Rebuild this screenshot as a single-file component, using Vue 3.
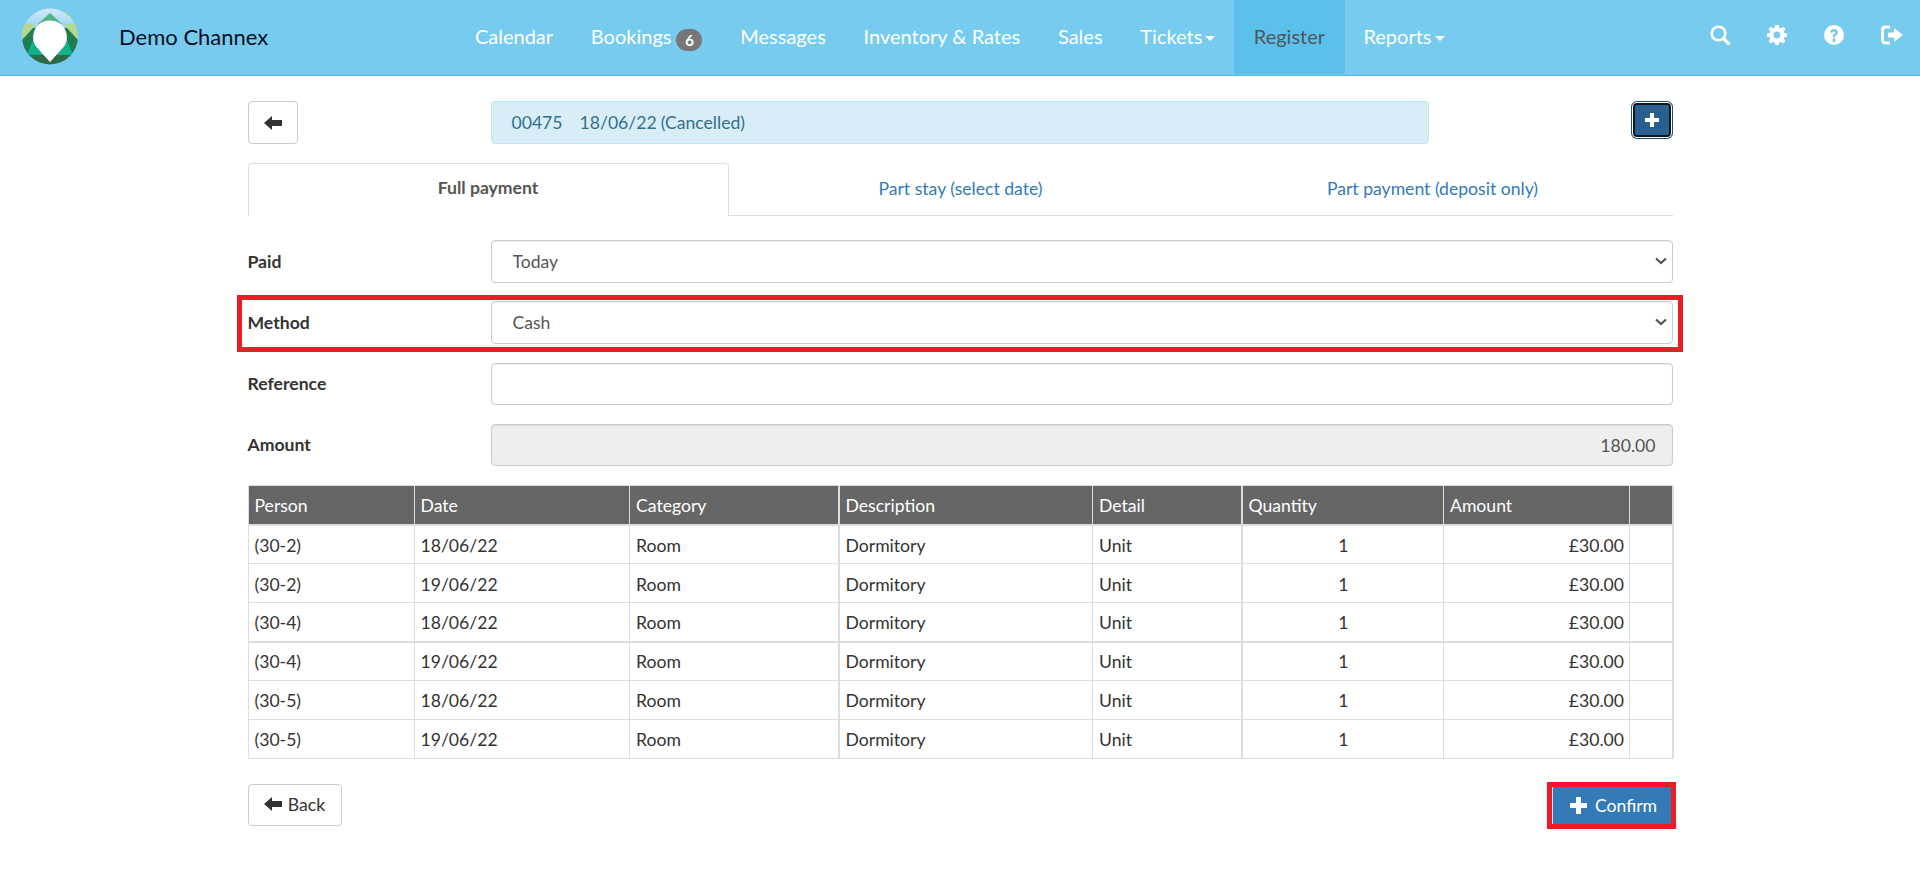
<script setup>
const navItems = [
  { label: 'Calendar' },
  { label: 'Bookings', badge: '6' },
  { label: 'Messages' },
  { label: 'Inventory & Rates' },
  { label: 'Sales' },
  { label: 'Tickets', caret: true },
  { label: 'Register', active: true },
  { label: 'Reports', caret: true }
]
const columns = ['Person', 'Date', 'Category', 'Description', 'Detail', 'Quantity', 'Amount', '']
const widths = [166, 215.5, 209, 254, 149, 202, 186, 43.5]
const rows = [
  ['(30-2)', '18/06/22'],
  ['(30-2)', '19/06/22'],
  ['(30-4)', '18/06/22'],
  ['(30-4)', '19/06/22'],
  ['(30-5)', '18/06/22'],
  ['(30-5)', '19/06/22']
]
</script>

<template>
  <div class="page">
    <header class="nav">
      <svg class="logo" viewBox="22 8 56 57" width="56" height="57" aria-hidden="true">
        <defs>
          <clipPath id="logoClip"><circle cx="50" cy="36.5" r="28" /></clipPath>
          <linearGradient id="sky" x1="0" y1="0" x2="0" y2="1">
            <stop offset="0" stop-color="#d4ecfb" />
            <stop offset="0.45" stop-color="#84cbec" />
          </linearGradient>
        </defs>
        <g clip-path="url(#logoClip)">
          <rect x="22" y="8" width="56" height="57" fill="url(#sky)" />
          <polygon points="22,24 34,24 34,38 22,38" fill="#b4d98c" />
          <polygon points="78,24 66,24 66,38 78,38" fill="#b4d98c" />
          <polygon points="50,13 38,24 62,24" fill="#4fb286" />
          <polygon points="63,12 73,12 73,20" fill="#f7e81e" />
          <polygon points="22,40 33,28 36,28 36,56 22,56" fill="#1f7d52" />
          <polygon points="78,40 67,28 64,28 64,56 78,56" fill="#1f7d52" />
          <polygon points="33,40 67,40 73,55 27,55" fill="#10b08c" />
          <rect x="22" y="55" width="56" height="10" fill="#2c6b45" />
        </g>
        <path d="M50 61.500 L36.500 46.500 C30.500 39 33.500 21 50 21 C66.500 21 69.500 39 63.500 46.500 Z" fill="#fff" stroke="#fff" stroke-linejoin="round" />
      </svg>
      <a class="brand">Demo Channex</a>
      <nav class="menu">
        <a v-for="item in navItems" :key="item.label" class="menu-item" :class="{ active: item.active }">
          {{ item.label }}<span v-if="item.badge" class="badge">{{ item.badge }}</span><span v-if="item.caret" class="caret"></span>
        </a>
      </nav>
      <div class="tools">
        <svg viewBox="0 0 20 20" width="20" height="20" aria-hidden="true">
          <circle cx="8.500" cy="8.500" r="6.800" fill="none" stroke="#fff" stroke-width="2.600" />
          <path d="M13.500 13.500 L19 19" stroke="#fff" stroke-width="3.200" stroke-linecap="round" />
        </svg>
        <svg viewBox="0 0 20 20" width="20" height="20" aria-hidden="true">
          <path fill="#fff" fill-rule="evenodd" d="M8.200 0h3.600l.5 2.800 1.500.6L16.200 1.800l2.200 2.200-1.600 2.400.6 1.500 2.600.5v3.400l-2.600.5-.6 1.500 1.600 2.400-2.200 2.200-2.400-1.600-1.500.6-.5 2.600H8.200l-.5-2.600-1.500-.6-2.400 1.600-2.200-2.200 1.600-2.400-.6-1.500L0 11.800V8.400l2.600-.5.6-1.500L1.600 4l2.200-2.200 2.400 1.600 1.500-.6zM10 6.600a3.400 3.400 0 1 0 0 6.800 3.400 3.400 0 0 0 0-6.800z" />
        </svg>
        <svg viewBox="0 0 20 20" width="20" height="20" aria-hidden="true">
          <path fill="#fff" fill-rule="evenodd" d="M10 0a10 10 0 1 1 0 20 10 10 0 0 1 0-20zM6.200 7.400l2.400.4c.2-.9.7-1.400 1.500-1.400.7 0 1.200.4 1.200 1 0 .5-.3.8-1 1.300-1.200.8-1.600 1.500-1.600 3v.5h2.500v-.3c0-.8.2-1.100 1-1.700 1.100-.8 1.700-1.500 1.700-2.900 0-2-1.700-3.300-3.900-3.300-2.200 0-3.800 1.200-3.800 3.400zM8.700 13.200V17h2.500v-3.800z" />
        </svg>
        <svg viewBox="0 0 22 20" width="22" height="20" aria-hidden="true">
          <path d="M9 2 H4.500 C2.800 2 1.500 3.300 1.500 5 V15 C1.500 16.700 2.800 18 4.500 18 H9" fill="none" stroke="#fff" stroke-width="2.800" />
          <polygon points="7,7.500 13,7.500 13,3 22,10 13,17 13,12.500 7,12.500" fill="#fff" />
        </svg>
      </div>
    </header>

    <main class="content">
      <div class="top-row">
        <button class="btn back-square" type="button">
          <svg class="arrow" viewBox="0 0 18 14" width="18" height="14" aria-hidden="true"><path d="M0 7 L8 0 V4 H18 V10 H8 V14 Z" fill="#333" /></svg>
        </button>
        <div class="booking"><span class="booking-id">00475</span><span>18/06/22</span><span>(Cancelled)</span></div>
        <button class="add" type="button">
          <svg viewBox="0 0 14 14" width="14" height="14" aria-hidden="true"><path d="M5 0 H9 V5 H14 V9 H9 V14 H5 V9 H0 V5 H5 Z" fill="#fff" /></svg>
        </button>
      </div>

      <div class="tabs">
        <a class="tab current">Full payment</a>
        <a class="tab">Part stay (select date)</a>
        <a class="tab">Part payment (deposit only)</a>
      </div>

      <form class="form" @submit.prevent>
        <div class="field select-field">
          <label>Paid</label>
          <div class="select-wrap">
            <select class="control"><option>Today</option></select>
            <svg class="chevron" viewBox="0 0 12 8" width="12" height="8" aria-hidden="true"><path d="M1 1.500 L6 6 L11 1.500" fill="none" stroke="#555" stroke-width="2.200" /></svg>
          </div>
        </div>
        <div class="field select-field marked">
          <label>Method</label>
          <div class="select-wrap">
            <select class="control"><option>Cash</option></select>
            <svg class="chevron" viewBox="0 0 12 8" width="12" height="8" aria-hidden="true"><path d="M1 1.500 L6 6 L11 1.500" fill="none" stroke="#555" stroke-width="2.200" /></svg>
          </div>
        </div>
        <div class="field">
          <label>Reference</label>
          <input class="control" type="text" />
        </div>
        <div class="field">
          <label>Amount</label>
          <input class="control amount" type="text" value="180.00" disabled />
        </div>
      </form>

      <table class="items">
        <colgroup>
          <col v-for="(w, i) in widths" :key="i" :style="{ width: w + 'px' }" />
        </colgroup>
        <thead>
          <tr><th v-for="(c, i) in columns" :key="i" :class="{ thick: i === 3 || i === 5 }">{{ c }}</th></tr>
        </thead>
        <tbody>
          <tr v-for="(r, i) in rows" :key="i" :class="{ split: i === 3 }">
            <td>{{ r[0] }}</td>
            <td>{{ r[1] }}</td>
            <td>Room</td>
            <td class="thick">Dormitory</td>
            <td>Unit</td>
            <td class="thick center">1</td>
            <td class="right">£30.00</td>
            <td></td>
          </tr>
        </tbody>
      </table>

      <div class="actions">
        <button class="btn back" type="button">
          <svg viewBox="0 0 18 14" width="18" height="14" aria-hidden="true"><path d="M0 7 L8 0 V4 H18 V10 H8 V14 Z" fill="#333" /></svg>
          Back
        </button>
        <div class="confirm-wrap">
          <button class="confirm" type="button">
            <svg viewBox="0 0 17 17" width="17" height="17" aria-hidden="true"><path d="M6 0 H11 V6 H17 V11 H11 V17 H6 V11 H0 V6 H6 Z" fill="#fff" /></svg>
            Confirm
          </button>
        </div>
      </div>
    </main>
  </div>
</template>

<style>
html, body { margin: 0; background: #fff; }
</style>

<style scoped>
.page {
  font-family: Lato, "Open Sans", sans-serif;
  font-size: 17.6px;
  color: #333;
  min-height: 896px;
}
.nav {
  height: 75px;
  background: #77cbee;
  border-bottom: 1px solid #5bb6dc;
  display: flex;
  align-items: flex-start;
  position: relative;
}
.logo { margin: 8px 0 0 22px; flex: none; }
.brand {
  margin: 22px 0 0 41px;
  width: 337px;
  flex: none;
  font-size: 22px;
  line-height: 30px;
  color: #0d0d22;
}
.menu { display: flex; height: 74px; }
.menu-item {
  padding: 0 18.900px;
  font-size: 20px;
  line-height: 73px;
  color: #fff;
  white-space: nowrap;
}
.menu-item.active { background: #5bc0ea; color: #555; padding: 0 19.500px; }
.badge {
  display: inline-block;
  margin-left: 5px;
  width: 26px;
  height: 22px;
  line-height: 22px;
  border-radius: 11px;
  background: #777;
  color: #fff;
  font-size: 15px;
  font-weight: 700;
  text-align: center;
  vertical-align: -2px;
}
.caret {
  display: inline-block;
  margin-left: 3px;
  width: 0;
  height: 0;
  border-top: 5px solid #fff;
  border-left: 5px solid transparent;
  border-right: 5px solid transparent;
  vertical-align: middle;
}
.tools {
  margin-left: auto;
  margin-right: 17px;
  margin-top: 25px;
  display: flex;
  gap: 37px;
}
.tools svg { display: block; }

.content {
  width: 1425px;
  margin: 0 auto;
  padding-top: 25px;
}
.top-row {
  display: grid;
  grid-template-columns: 243px 938px 1fr;
  align-items: start;
}
.btn {
  font: inherit;
  color: #333;
  background: #fff;
  border: 1px solid #ccc;
  border-radius: 4px;
  display: flex;
  align-items: center;
  justify-content: center;
}
.back-square { width: 50px; height: 43px; padding: 0; }
.booking {
  height: 43px;
  box-sizing: border-box;
  background: #d9edf7;
  border: 1px solid #bce8f1;
  border-radius: 4px;
  color: #31708f;
  display: flex;
  align-items: center;
  padding-left: 20px;
  gap: 4px;
}
.booking-id { margin-right: 13px; }
.add {
  justify-self: end;
  width: 38px;
  height: 34px;
  margin: 2px 2px 0 0;
  padding: 0;
  background: #286090;
  border: 2px solid #101820;
  border-radius: 4px;
  box-shadow: 0 0 0 1px #fff, 0 0 0 2px #204d74;
  display: flex;
  align-items: center;
  justify-content: center;
}
.tabs {
  margin-top: 19px;
  display: grid;
  grid-template-columns: 481px 464px 1fr;
  height: 53px;
  box-sizing: border-box;
}
.tab {
  color: #337ab7;
  text-align: center;
  line-height: 51px;
  border-bottom: 1px solid #ddd;
}
.tab.current {
  color: #555;
  font-weight: 700;
  line-height: 48px;
  border: 1px solid #ddd;
  border-bottom: 0;
  border-radius: 4px 4px 0 0;
  background: #fff;
}
.form {
  margin-top: 24px;
  display: flex;
  flex-direction: column;
  gap: 19px;
}
.form > .select-field + .select-field { margin-top: -1px; }
.field {
  display: grid;
  grid-template-columns: 243px 1fr;
  align-items: center;
  position: relative;
}
.field label { font-weight: 700; color: #333; margin-top: -1px; }
.control {
  font: inherit;
  color: #555;
  width: 100%;
  height: 42px;
  box-sizing: border-box;
  background: #fff;
  border: 1px solid #ccc;
  border-radius: 4px;
  box-shadow: inset 0 1px 1px rgba(0, 0, 0, .075);
  padding: 6px 16px;
  outline: 0;
}
.select-wrap { position: relative; }
select.control {
  display: block;
  height: 43px;
  appearance: none;
  padding-left: 21px;
}
.chevron {
  position: absolute;
  right: 6px;
  top: 17px;
  pointer-events: none;
}
.amount { background: #eee; text-align: right; opacity: 1; }
.marked::after {
  content: "";
  position: absolute;
  inset: -6px -10px -8px -11px;
  border: 5px solid #ed1c24;
  pointer-events: none;
}
.items {
  margin-top: 19px;
  width: 1425px;
  table-layout: fixed;
  border-collapse: collapse;
  border: 1px solid #ddd;
  border-right-width: 2px;
}
.items th, .items td {
  height: 39px;
  box-sizing: border-box;
  padding: 2px 5px 0 6px;
  border: 1px solid #ddd;
  font-weight: 400;
  text-align: left;
  white-space: nowrap;
}
.items tbody tr:nth-child(n+4) td { padding-top: 0; }
.items th {
  background: #666;
  color: #fff;
  border-bottom-width: 2px;
}
.items .thick { border-left-width: 2px; }
.items .split td { border-top-width: 2px; }
.items .center { text-align: center; }
.items .right { text-align: right; }
.actions {
  margin-top: 25px;
  display: flex;
  justify-content: space-between;
  align-items: flex-end;
}
.back {
  width: 94px;
  height: 42px;
  gap: 6px;
  padding: 0 0 2px;
}
.confirm-wrap { position: relative; }
.confirm-wrap::after {
  content: "";
  position: absolute;
  inset: -5px -3px -3px -5px;
  border: 5px solid #ed1c24;
  pointer-events: none;
}
.confirm {
  font: inherit;
  color: #fff;
  width: 121px;
  height: 39px;
  padding: 0 0 3px 2px;
  background: #337ab7;
  border: 0;
  border-left: 1px solid #cfe0ee;
  display: flex;
  align-items: center;
  justify-content: center;
  gap: 8px;
}
</style>
